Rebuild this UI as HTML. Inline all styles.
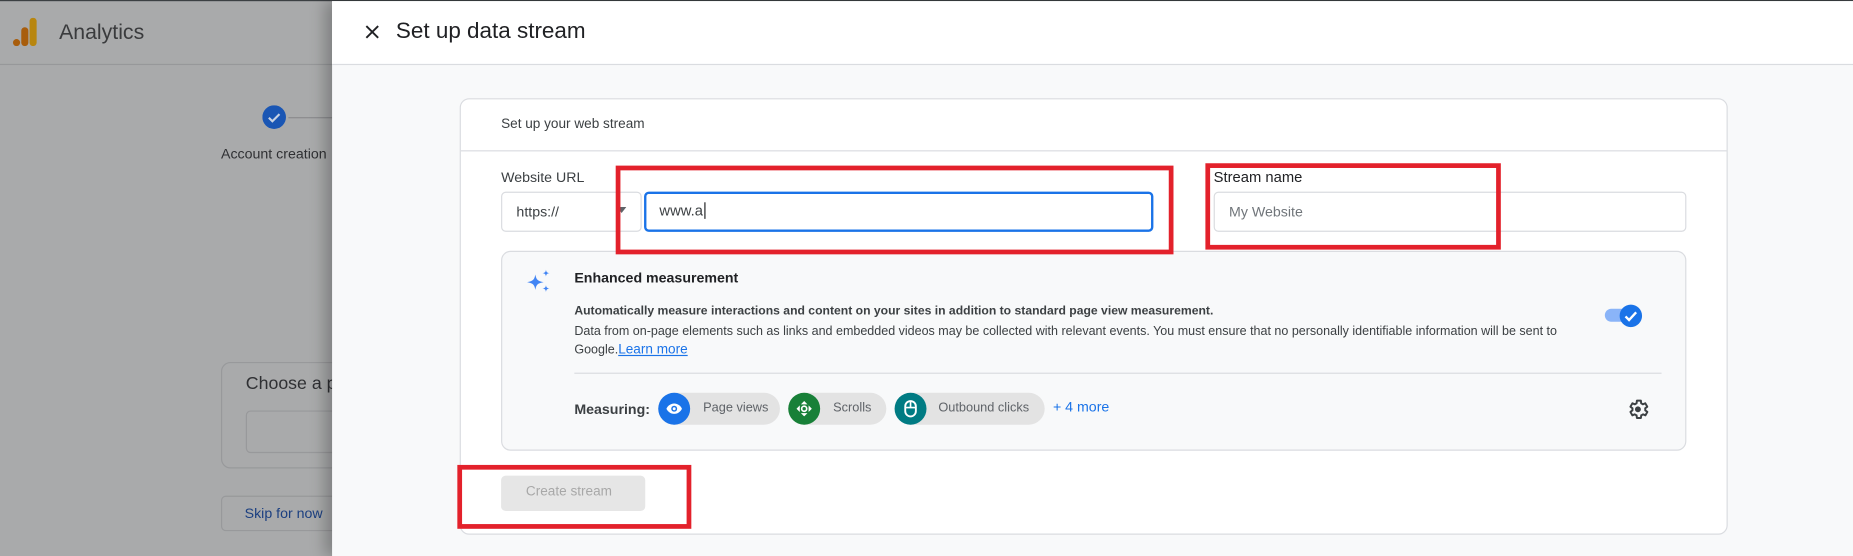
<!DOCTYPE html>
<html><head><meta charset="utf-8"><style>
*{box-sizing:border-box;margin:0;padding:0}
html,body{width:1853px;height:556px;overflow:hidden;background:#fff}
body{font-family:"Liberation Sans",Arial,sans-serif}
#w{position:absolute;left:0;top:0;width:1568px;height:470px;transform:scale(1.18176,1.183);transform-origin:0 0;background:#a9aaab;overflow:hidden}
.a{position:absolute}
.t{position:absolute;white-space:nowrap}
.red{position:absolute;border:4px solid #e3212b}
</style></head><body><div id="w">
<div class="a" style="left:0;top:0;width:1568px;height:1px;background:#3c4043"></div>
<div class="a" style="left:0;top:54px;width:281px;height:1px;background:#97989a"></div>
<svg class="a" style="left:10px;top:15px" width="24" height="24" viewBox="0 0 24 24"><rect x="15" y="0" width="6" height="24" rx="3" fill="#b8860f"/><rect x="8" y="8" width="6" height="16" rx="3" fill="#a85d0c"/><circle cx="4" cy="21" r="3" fill="#a85d0c"/></svg>
<div class="t" style="left:50px;top:17px;font-size:18px;color:#3a3b3d">Analytics</div>
<svg class="a" style="left:222px;top:89px" width="20" height="20"><circle cx="10" cy="10" r="10" fill="#1a56b4"/><path d="M5.5 10.5l3 3 6-6" stroke="#c8d3e4" stroke-width="1.8" fill="none"/></svg>
<div class="a" style="left:244px;top:99px;width:40px;height:1px;background:#8a8b8d"></div>
<div class="t" style="left:187px;top:123px;font-size:12px;color:#2f3033">Account creation</div>
<div class="a" style="left:187px;top:306px;width:120px;height:90px;border:1px solid #98999b;border-radius:8px"></div>
<div class="t" style="left:208px;top:316px;font-size:15px;color:#2f3033">Choose a pl</div>
<div class="a" style="left:208px;top:347px;width:100px;height:36px;border:1px solid #98999b;border-radius:4px"></div>
<div class="a" style="left:187px;top:419px;width:110px;height:30px;border:1px solid #98999b;border-radius:4px"></div>
<div class="t" style="left:207px;top:427px;font-size:12px;color:#1b3f80">Skip for now</div>
<div class="a" style="left:281px;top:1px;width:1287px;height:469px;background:#f8f9fa;box-shadow:-6px 0 12px rgba(0,0,0,.25)"></div>
<div class="a" style="left:281px;top:1px;width:1287px;height:54px;background:#fff;border-bottom:1px solid #dadce0"></div>
<svg class="a" style="left:309px;top:21px" width="12" height="12"><path d="M1 1L11 11M11 1L1 11" stroke="#202124" stroke-width="1.6"/></svg>
<div class="t" style="left:335px;top:16px;font-size:19px;color:#202124">Set up data stream</div>
<div class="a" style="left:389px;top:83px;width:1073px;height:369px;background:#fff;border:1px solid #dadce0;border-radius:8px"></div>
<div class="t" style="left:424px;top:99px;font-size:11.5px;color:#3c4043">Set up your web stream</div>
<div class="a" style="left:390px;top:127px;width:1071px;height:1px;background:#dadce0"></div>
<div class="t" style="left:424px;top:143px;font-size:12px;color:#3c4043">Website URL</div>
<div class="a" style="left:424px;top:162px;width:119px;height:34px;border:1px solid #dadce0;border-radius:4px"></div>
<div class="t" style="left:437px;top:172px;font-size:12px;color:#3c4043">https://</div>
<svg class="a" style="left:522px;top:175px" width="8" height="5"><path d="M0 0h8L4 5z" fill="#5f6368"/></svg>
<div class="a" style="left:545px;top:162px;width:431px;height:34px;border:2px solid #1a73e8;border-radius:4px"></div>
<div class="t" style="left:558px;top:171px;font-size:12.5px;color:#3c4043">www.a<span style="border-left:1px solid #202124;margin-left:1px"></span></div>
<div class="t" style="left:1027px;top:143px;font-size:12.5px;color:#202124">Stream name</div>
<div class="a" style="left:1027px;top:162px;width:400px;height:34px;border:1px solid #dadce0;border-radius:4px"></div>
<div class="t" style="left:1040px;top:172px;font-size:12px;color:#70757a">My Website</div>
<div class="a" style="left:424px;top:212px;width:1003px;height:169px;background:#f8f9fa;border:1px solid #dadce0;border-radius:8px"></div>
<svg class="a" style="left:445px;top:227px" width="22" height="22" viewBox="0 0 22 22" fill="#4285f4"><path d="M8 5C8.8 9.5 10 10.5 15 11.5 10 12.5 8.8 13.5 8 18 7.2 13.5 6 12.5 1 11.5 6 10.5 7.2 9.5 8 5z"/><path d="M17 1C17.3 3 17.8 3.5 20 3.9 17.8 4.3 17.3 4.8 17 6.8 16.7 4.8 16.2 4.3 14 3.9 16.2 3.5 16.7 3 17 1z"/><path d="M17 14C17.3 16 17.8 16.5 20 16.9 17.8 17.3 17.3 17.8 17 19.8 16.7 17.8 16.2 17.3 14 16.9 16.2 16.5 16.7 16 17 14z"/></svg>
<div class="t" style="left:486px;top:228px;font-size:12px;font-weight:bold;color:#202124">Enhanced measurement</div>
<div class="t" style="left:486px;top:258px;font-size:10.3px;font-weight:bold;color:#3c4043">Automatically measure interactions and content on your sites in addition to standard page view measurement.</div>
<div class="t" style="left:486px;top:274px;font-size:10.6px;color:#3c4043">Data from on-page elements such as links and embedded videos may be collected with relevant events. You must ensure that no personally identifiable information will be sent to</div>
<div class="t" style="left:486px;top:290px;font-size:10.6px;color:#3c4043">Google.<span style="color:#1a73e8;text-decoration:underline;font-size:11.5px">Learn more</span></div>
<div class="a" style="left:1358px;top:261px;width:26px;height:11px;border-radius:6px;background:#8ab4f8"></div>
<svg class="a" style="left:1370px;top:257px" width="20" height="20"><circle cx="10" cy="10" r="9.5" fill="#1a73e8"/><path d="M5.5 10.5l3 3 6-6.5" stroke="#fff" stroke-width="2" fill="none"/></svg>
<div class="a" style="left:486px;top:315px;width:920px;height:1px;background:#dadce0"></div>
<div class="t" style="left:486px;top:339px;font-size:12px;font-weight:bold;color:#3c4043">Measuring:</div>
<div class="a" style="left:557px;top:332px;width:103px;height:27px;border-radius:14px;background:#e3e3e3"></div>
<div class="a" style="left:557px;top:332px;width:27px;height:27px;border-radius:50%;background:#1a73e8"></div>
<svg class="a" style="left:563px;top:338px" width="15" height="15" viewBox="0 0 24 24"><path d="M12 5C7 5 3 8.5 1.5 12 3 15.5 7 19 12 19s9-3.5 10.5-7C21 8.5 17 5 12 5z" fill="#fff"/><circle cx="12" cy="12" r="4" fill="#1a73e8"/><circle cx="12" cy="12" r="2" fill="#fff"/></svg>
<div class="t" style="left:595px;top:339px;font-size:10.8px;color:#5f6368">Page views</div>
<div class="a" style="left:667px;top:332px;width:83px;height:27px;border-radius:14px;background:#e3e3e3"></div>
<div class="a" style="left:667px;top:332px;width:27px;height:27px;border-radius:50%;background:#188038"></div>
<svg class="a" style="left:674px;top:339px" width="13" height="13" viewBox="0 0 14 14"><path d="M7 0L10 3H4zM7 14L4 11h6zM0 7l3-3v6zM14 7l-3 3V4z" fill="#fff"/><circle cx="7" cy="7" r="2.3" fill="none" stroke="#fff" stroke-width="1.5"/></svg>
<div class="t" style="left:705px;top:339px;font-size:10.8px;color:#5f6368">Scrolls</div>
<div class="a" style="left:757px;top:332px;width:127px;height:27px;border-radius:14px;background:#e3e3e3"></div>
<div class="a" style="left:757px;top:332px;width:27px;height:27px;border-radius:50%;background:#007b83"></div>
<svg class="a" style="left:765px;top:338px" width="11" height="15" viewBox="0 0 11 15"><rect x="1" y="1" width="9" height="13" rx="4.5" fill="none" stroke="#fff" stroke-width="1.6"/><path d="M1 6.5h9M5.5 1v5.5" stroke="#fff" stroke-width="1.4"/></svg>
<div class="t" style="left:794px;top:339px;font-size:10.8px;color:#5f6368">Outbound clicks</div>
<div class="t" style="left:891px;top:337px;font-size:12px;color:#1a73e8">+ 4 more</div>
<svg class="a" style="left:1376px;top:336px" width="20" height="20" viewBox="0 0 24 24"><path d="M19.4 13a7.5 7.5 0 000-2l2.1-1.6-2-3.5-2.5 1a7.6 7.6 0 00-1.7-1L15 3.2h-4l-.4 2.7a7.6 7.6 0 00-1.7 1l-2.5-1-2 3.5L6.5 11a7.5 7.5 0 000 2l-2.1 1.6 2 3.5 2.5-1a7.6 7.6 0 001.7 1l.4 2.7h4l.4-2.7a7.6 7.6 0 001.7-1l2.5 1 2-3.5z" fill="none" stroke="#3c4043" stroke-width="2" stroke-linejoin="round"/><circle cx="12" cy="12" r="3" fill="#3c4043"/></svg>
<div class="a" style="left:424px;top:402px;width:122px;height:30px;border-radius:4px;background:#e6e6e6"></div>
<div class="t" style="left:445px;top:410px;font-size:11.5px;color:#a8a8a8">Create stream</div>
<div class="red" style="left:521px;top:140px;width:472px;height:75px"></div>
<div class="red" style="left:1020px;top:138px;width:250px;height:73px"></div>
<div class="red" style="left:387px;top:393px;width:198px;height:54px"></div>
</div></body></html>
